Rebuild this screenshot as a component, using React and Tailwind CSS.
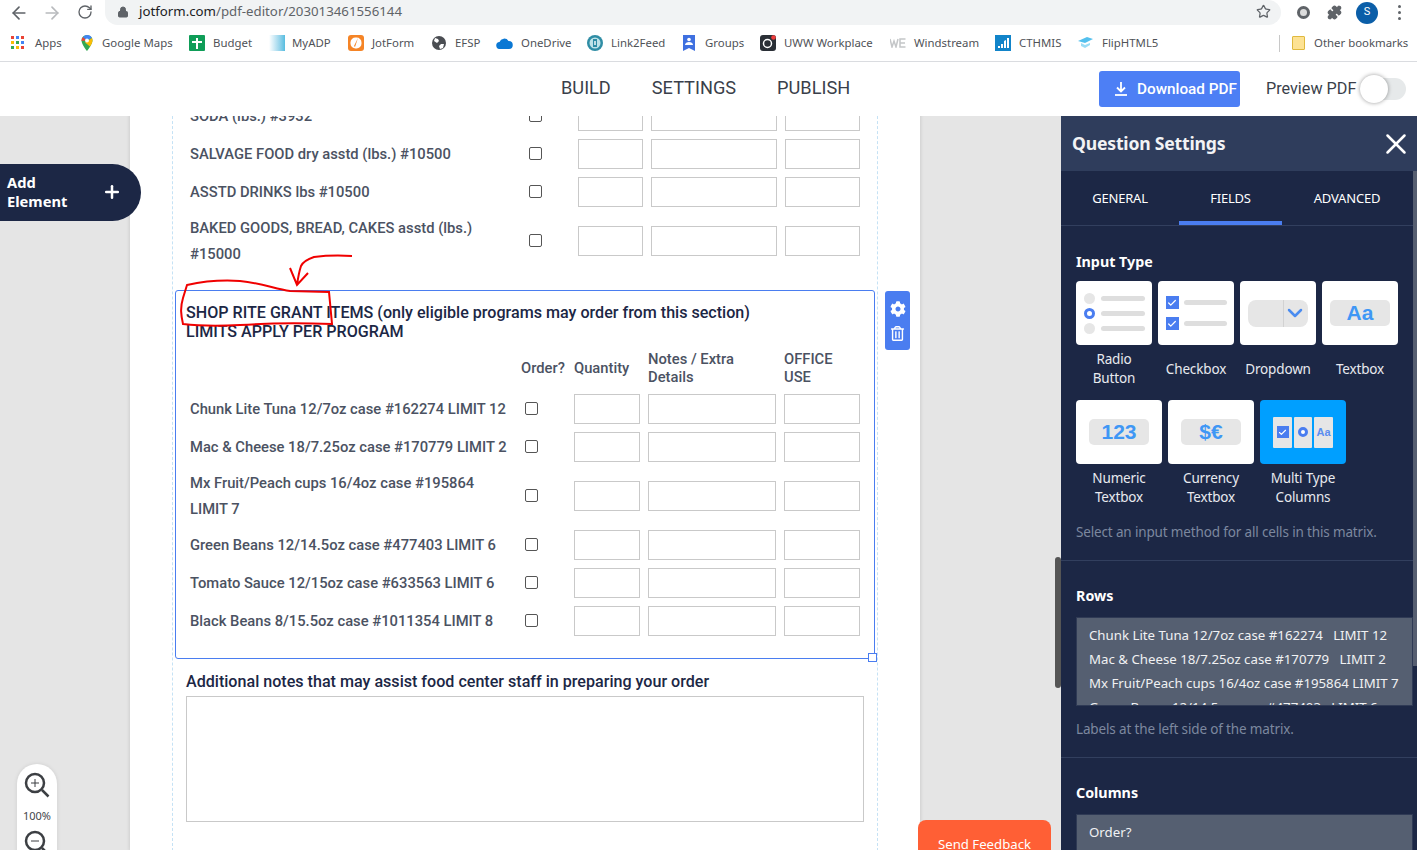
import { ArrowLeft, ArrowRight, RotateCw, Lock, Star, Puzzle, Plus, X, ChevronDown, Check } from 'lucide-react';
import { FaCog, FaRegTrashAlt } from 'react-icons/fa';

const bookmarks = [
  { label: 'Apps', width: 'w-[69px]', gap: 'gap-[11px]', icon: <AppsIcon /> },
  { label: 'Google Maps', width: 'w-[109px]', gap: 'gap-[8px]', icon: <MapsIcon /> },
  { label: 'Budget', width: 'w-[80px]', gap: 'gap-[8px]', icon: <BudgetIcon /> },
  { label: 'MyADP', width: 'w-[79px]', gap: 'gap-[7px]', icon: <MyAdpIcon /> },
  { label: 'JotForm', width: 'w-[83px]', gap: 'gap-[8px]', icon: <JotIcon /> },
  { label: 'EFSP', width: 'w-[65px]', gap: 'gap-[8px]', icon: <GlobeIcon /> },
  { label: 'OneDrive', width: 'w-[91px]', gap: 'gap-[8px]', icon: <CloudIcon /> },
  { label: 'Link2Feed', width: 'w-[95px]', gap: 'gap-[8px]', icon: <LinkIcon /> },
  { label: 'Groups', width: 'w-[78px]', gap: 'gap-[9px]', icon: <GroupsIcon /> },
  { label: 'UWW Workplace', width: 'w-[130px]', gap: 'gap-[8px]', icon: <UwwIcon /> },
  { label: 'Windstream', width: 'w-[105px]', gap: 'gap-[8px]', icon: <WeIcon /> },
  { label: 'CTHMIS', width: 'w-[83px]', gap: 'gap-[8px]', icon: <CthIcon /> },
  { label: 'FlipHTML5', width: 'w-[201px]', gap: 'gap-[8px]', icon: <FlipIcon /> },
];

const foodRows = [
  { label: 'SALVAGE FOOD dry asstd (lbs.) #10500' },
  { label: 'ASSTD DRINKS lbs #10500' },
  { label: 'BAKED GOODS, BREAD, CAKES asstd (lbs.) #15000' },
];

const grantRows = [
  { label: 'Chunk Lite Tuna 12/7oz case #162274 LIMIT 12' },
  { label: 'Mac & Cheese 18/7.25oz case #170779 LIMIT 2' },
  { label: 'Mx Fruit/Peach cups 16/4oz case #195864 LIMIT 7' },
  { label: 'Green Beans 12/14.5oz case #477403 LIMIT 6' },
  { label: 'Tomato Sauce 12/15oz case #633563 LIMIT 6' },
  { label: 'Black Beans 8/15.5oz case #1011354 LIMIT 8' },
];

function AppsIcon() {
  const colors = ['bg-[#ea4335]', 'bg-[#4285f4]', 'bg-[#ea4335]', 'bg-[#fbbc05]', 'bg-[#34a853]', 'bg-[#4285f4]', 'bg-[#34a853]', 'bg-[#fbbc05]', 'bg-[#ea4335]'];
  return (
    <div className="grid h-[13px] w-[13px] grid-cols-3 gap-[2px]">
      {colors.map((color, i) => (
        <span key={i} className={color} />
      ))}
    </div>
  );
}

function MapsIcon() {
  return (
    <svg width="14" height="16" viewBox="0 0 14 16">
      <path d="M7 0a5.5 5.5 0 0 0-5.5 5.5C1.500 9.500 7 16 7 16s5.500-6.500 5.500-10.500A5.500 5.500 0 0 0 7 0z" fill="#34a853" />
      <path d="M3 2 7 5.500 1.500 6A5.500 5.500 0 0 1 3 2z" fill="#ea4335" />
      <path d="M7 0a5.500 5.500 0 0 1 5 3L7 5.500 3 2a5.500 5.500 0 0 1 4-2z" fill="#4285f4" />
      <path d="M12 3a5.500 5.500 0 0 1 .5 2.500C12.500 7.500 11 10 10 11.500L5 7.500z" fill="#fbbc05" />
      <circle cx="7" cy="5.500" r="2" fill="#fff" />
    </svg>
  );
}

function BudgetIcon() {
  return (
    <svg width="16" height="16" viewBox="0 0 16 16">
      <rect width="16" height="16" rx="1" fill="#0f9d58" />
      <path d="M7 3h2v3h4v2H9v6H7V8H3V6h4z" fill="#fff" />
    </svg>
  );
}

function MyAdpIcon() {
  return <div className="h-4 w-4 bg-gradient-to-r from-white to-[#55bde0]" />;
}

function JotIcon() {
  return (
    <svg width="16" height="16" viewBox="0 0 16 16">
      <rect width="16" height="16" rx="3" fill="#f58426" />
      <rect x="2.500" y="2.500" width="11" height="11" rx="5" fill="#fff" />
      <path d="M10 3 7 12l-1-1z" fill="#f58426" />
    </svg>
  );
}

function GlobeIcon() {
  return (
    <svg width="16" height="16" viewBox="0 0 16 16">
      <circle cx="8" cy="8" r="7" fill="#4a4d52" />
      <path d="M4 3l3 1 1 2-2 2-3-2zM10 9l3 0-1 4-3 1-1-3z" fill="#fff" />
    </svg>
  );
}

function CloudIcon() {
  return (
    <svg width="17" height="12" viewBox="0 0 17 12">
      <path d="M4 12a3.500 3.500 0 0 1-.5-7A5 5 0 0 1 12.500 4 4 4 0 0 1 13 12z" fill="#0a78d4" />
    </svg>
  );
}

function LinkIcon() {
  return (
    <svg width="16" height="16" viewBox="0 0 16 16">
      <circle cx="8" cy="8" r="8" fill="#2f8da5" />
      <circle cx="8" cy="8" r="5.500" fill="#bfe3e8" />
      <rect x="6" y="4" width="4" height="8" fill="#2f8da5" />
      <rect x="7.300" y="6" width="1.400" height="4" fill="#fff" />
    </svg>
  );
}

function GroupsIcon() {
  return (
    <svg width="14" height="16" viewBox="0 0 14 16">
      <path d="M1 0h12v16l-6-3-6 3z" fill="#3f70e0" />
      <circle cx="7" cy="4.500" r="1.800" fill="#fff" />
      <path d="M3 10c0-2 2-3 4-3s4 1 4 3z" fill="#fff" />
    </svg>
  );
}

function UwwIcon() {
  return (
    <svg width="16" height="16" viewBox="0 0 16 16">
      <rect width="16" height="16" rx="3" fill="#2a2f36" />
      <circle cx="7.500" cy="8.500" r="4" fill="none" stroke="#fff" strokeWidth="1.500" />
      <circle cx="13.500" cy="2.500" r="2.300" fill="#ef3b3b" />
    </svg>
  );
}

function WeIcon() {
  return (
    <svg width="16" height="10" viewBox="0 0 16 10" fill="none" stroke="#c4c6c8" strokeWidth="1.500">
      <path d="M0 1l2 8 2-6 2 6 2-8" />
      <path d="M15.500 1H10v8h5.500M10 5h5" />
    </svg>
  );
}

function CthIcon() {
  return (
    <svg width="16" height="16" viewBox="0 0 16 16">
      <rect width="16" height="16" fill="#1284c9" />
      <path d="M3 13v-2h2v2zM6 13V9h2v4zM9 13V6l2-1v8zM12 13V3h2v10z" fill="#fff" />
    </svg>
  );
}

function FlipIcon() {
  return (
    <svg width="16" height="14" viewBox="0 0 16 14">
      <path d="M0 5l9-4 6 2-8 4z" fill="#53c0ee" />
      <path d="M3 7l4 2 5-2v2l-5 3-4-2z" fill="#9adcf5" />
    </svg>
  );
}

function DownloadIcon() {
  return (
    <svg width="12" height="14" viewBox="0 0 12 14" fill="none" stroke="#fff" strokeWidth="1.800">
      <path d="M6 0v9M2 5.500 6 9.500l4-4" />
      <path d="M0 13h12" />
    </svg>
  );
}

function ZoomIcon({ plus }) {
  return (
    <svg width="26" height="26" viewBox="0 0 26 26" fill="none" stroke="#3c3f43">
      <circle cx="11" cy="11" r="9" strokeWidth="2.500" />
      <path d="M18 18l6.500 6.500" strokeWidth="2.500" />
      <path d="M7 11h8" strokeWidth="1" />
      {plus && <path d="M11 7v8" strokeWidth="1" />}
    </svg>
  );
}

function Line({ className }) {
  return <span className={`block h-[5px] rounded-full bg-[#dedede] ${className}`} />;
}

function RadioTile() {
  return (
    <div className="flex flex-col gap-[4px]">
      {[0, 1, 2].map((i) => (
        <div key={i} className="flex items-center gap-[6px]">
          {i === 1 ? (
            <span className="h-[11px] w-[11px] rounded-full border-[3px] border-[#4a7df0] bg-white" />
          ) : (
            <span className="h-[11px] w-[11px] rounded-full bg-[#e6e6e6]" />
          )}
          <Line className="w-[44px]" />
        </div>
      ))}
    </div>
  );
}

function CheckTile() {
  return (
    <div className="flex flex-col gap-[8px]">
      {[0, 1].map((i) => (
        <div key={i} className="flex items-center gap-[5px]">
          <span className="flex h-[13px] w-[13px] items-center justify-center bg-[#4a7df0]">
            <Check size={10} strokeWidth={3} className="text-white" />
          </span>
          <Line className="w-[43px]" />
        </div>
      ))}
    </div>
  );
}

function DropdownTile() {
  return (
    <div className="flex h-[27px] w-[60px] items-center rounded-[8px] bg-[#e6e6e6]">
      <span className="h-full w-[36px] border-r border-[#d2d2d2]" />
      <ChevronDown size={24} strokeWidth={2.500} className="-ml-[1px] text-[#4a8cf0]" />
    </div>
  );
}

function TextPill({ children, width }) {
  return (
    <div className={`flex h-[26px] ${width} items-center justify-center rounded-[5px] bg-[#e6e6e6] font-['Liberation_Sans',sans-serif] text-[21px] font-bold text-[#3f97f5]`}>
      {children}
    </div>
  );
}

function MultiTile() {
  return (
    <div className="flex gap-[2px]">
      <span className="flex h-[31px] w-[19px] items-center justify-center rounded-[1px] bg-[#e6e6e6]">
        <span className="flex h-[12px] w-[12px] items-center justify-center bg-[#4a7df0]">
          <Check size={9} strokeWidth={3} className="text-white" />
        </span>
      </span>
      <span className="flex h-[31px] w-[18px] items-center justify-center rounded-[1px] bg-[#e6e6e6]">
        <span className="h-[10px] w-[10px] rounded-full border-[3px] border-[#4a7df0] bg-white" />
      </span>
      <span className="flex h-[31px] w-[19px] items-center justify-center rounded-[1px] bg-[#e6e6e6] font-['Liberation_Sans',sans-serif] text-[11px] font-bold text-[#5b8df0]">
        Aa
      </span>
    </div>
  );
}

function Tile({ width, active, lines, children }) {
  return (
    <div className={`${width} flex flex-col items-center`}>
      <div className={`flex h-[64px] w-full items-center justify-center rounded-[4px] ${active ? 'bg-[#009fff]' : 'bg-white'}`}>
        {children}
      </div>
      <div className="mt-[5px] flex h-[38px] items-center text-center text-[13.5px] leading-[19px] tracking-[-0.15px] text-[#e8eaef]">
        <span>
          {lines.map((line) => (
            <span key={line} className="block whitespace-nowrap">
              {line}
            </span>
          ))}
        </span>
      </div>
    </div>
  );
}

function CellInput({ width }) {
  return <div className={`h-[30px] ${width} border border-[#c9c9c9] bg-white`} />;
}

function MatrixRow({ label, labelWidth, inputs }) {
  return (
    <div className="flex items-center">
      <div className={`${labelWidth} pr-[15px] text-[14.75px] leading-[26px] font-medium text-[#4b5262]`}>{label}</div>
      <div className="mb-[2px] w-[49px]">
        <div className="h-[13px] w-[13px] rounded-[2px] border border-[#555] bg-white" />
      </div>
      <div className="flex gap-[8px]">
        {inputs.map((w, i) => (
          <CellInput key={i} width={w} />
        ))}
      </div>
    </div>
  );
}

function Document() {
  const firstInputs = ['w-[65px]', 'w-[126px]', 'w-[75px]'];
  const grantInputs = ['w-[66px]', 'w-[128px]', 'w-[76px]'];
  return (
    <div className="-mt-[15px] ml-[130px] h-[750px] w-[790px] bg-white shadow-[0_0_4px_rgba(0,0,0,0.15)]">
      <div className="ml-[42px] h-full w-[706px] border-x border-dashed border-[#c5e2f5]">
        <div className="flex flex-col gap-[8px] pl-[17px]">
          <MatrixRow label="SODA (lbs.) #3932" labelWidth="w-[339px]" inputs={firstInputs} />
          {foodRows.map((row) => (
            <MatrixRow key={row.label} label={row.label} labelWidth="w-[339px]" inputs={firstInputs} />
          ))}
        </div>

        {/* Selected question */}
        <div className="relative mt-[23px] ml-[2px] h-[369px] w-[700px] rounded-[3px] border border-[#4a7df0]">
          <div className="pt-[12px] pl-[10px] text-[16.1px] leading-[19px] font-medium text-[#1c2745]">
            <div>SHOP RITE GRANT ITEMS (only eligible programs may order from this section)</div>
            <div>LIMITS APPLY PER PROGRAM</div>
          </div>
          <div className="mt-[9px] flex h-[36px] items-center pl-[345px] text-[14.75px] leading-[18px] font-medium text-[#4b5262]">
            <span className="w-[53px]">Order?</span>
            <span className="w-[74px]">Quantity</span>
            <span className="w-[136px]">Notes / Extra<br />Details</span>
            <span>OFFICE<br />USE</span>
          </div>
          <div className="mt-[8px] flex flex-col gap-[8px] pl-[14px]">
            {grantRows.map((row) => (
              <MatrixRow key={row.label} label={row.label} labelWidth="w-[335px]" inputs={grantInputs} />
            ))}
          </div>
          <span className="absolute -right-[3px] -bottom-[4px] h-[9px] w-[9px] border border-[#4a7df0] bg-white" />
          <div className="absolute top-0 -right-[36px] flex h-[59px] w-[25px] flex-col items-center justify-center gap-[9px] rounded-[3px] bg-[#4a7df0] text-white">
            <FaCog size={16} />
            <FaRegTrashAlt size={15} />
          </div>
        </div>

        <div className="mt-[13px] ml-[13px] text-[16.1px] leading-[20px] font-medium text-[#1c2745]">
          Additional notes that may assist food center staff in preparing your order
        </div>
        <div className="mt-[4px] ml-[13px] h-[126px] w-[678px] border border-[#c9c9c9]" />
      </div>
    </div>
  );
}

function SettingsPanel() {
  return (
    <div className="absolute top-0 right-0 bottom-0 w-[356px] overflow-hidden bg-[#1c2745] font-['Noto_Sans',sans-serif] text-white">
      <div className="flex h-[55px] items-center justify-between bg-[#2f3d5c] pr-[4px] pl-[11px]">
        <span className="text-[17.6px] font-bold tracking-[-0.2px] text-[#f2f3f5]">Question Settings</span>
        <X size={34} strokeWidth={1.800} />
      </div>
      <div className="flex h-[55px] border-b border-[#323f5e] pr-[5px] text-[13px] tracking-[-0.2px]">
        <div className="flex w-[118px] items-center justify-center pt-[2px]">GENERAL</div>
        <div className="flex w-[103px] items-center justify-center border-b-[4px] border-[#4a7df0] pt-[6px]">FIELDS</div>
        <div className="flex flex-1 items-center justify-center pt-[2px]">ADVANCED</div>
      </div>

      <div className="h-[335px] border-b border-[#323f5e] px-[15px] pt-[26px]">
        <div className="text-[14.3px] leading-[20px] font-bold">Input Type</div>
        <div className="mt-[9px] flex gap-[6px]">
          <Tile width="w-[76px]" lines={['Radio', 'Button']}>
            <RadioTile />
          </Tile>
          <Tile width="w-[76px]" lines={['Checkbox']}>
            <CheckTile />
          </Tile>
          <Tile width="w-[76px]" lines={['Dropdown']}>
            <DropdownTile />
          </Tile>
          <Tile width="w-[76px]" lines={['Textbox']}>
            <TextPill width="w-[60px]">Aa</TextPill>
          </Tile>
        </div>
        <div className="mt-[12px] flex gap-[6px]">
          <Tile width="w-[86px]" lines={['Numeric', 'Textbox']}>
            <TextPill width="w-[60px]">123</TextPill>
          </Tile>
          <Tile width="w-[86px]" lines={['Currency', 'Textbox']}>
            <TextPill width="w-[60px]">$€</TextPill>
          </Tile>
          <Tile width="w-[86px]" active lines={['Multi Type', 'Columns']}>
            <MultiTile />
          </Tile>
        </div>
        <div className="mt-[15px] text-[13.5px] leading-[20px] tracking-[-0.15px] text-[#7c889f]">
          Select an input method for all cells in this matrix.
        </div>
      </div>

      <div className="h-[197px] border-b border-[#323f5e] px-[15px] pt-[25px]">
        <div className="text-[14.3px] leading-[20px] font-bold">Rows</div>
        <div className="mt-[11px] h-[89px] w-[337px] overflow-hidden border border-[#2f3a55] bg-[#555f71] pt-[5px] pl-[12px] text-[13.25px] leading-[24px] whitespace-pre text-[#f0f1f3]">
          <div>Chunk Lite Tuna 12/7oz case #162274   LIMIT 12</div>
          <div>Mac &amp; Cheese 18/7.25oz case #170779   LIMIT 2</div>
          <div>Mx Fruit/Peach cups 16/4oz case #195864 LIMIT 7</div>
          <div>Green Beans 12/14.5oz case #477403   LIMIT 6</div>
        </div>
        <div className="mt-[13px] text-[13.5px] leading-[20px] tracking-[-0.15px] text-[#7c889f]">
          Labels at the left side of the matrix.
        </div>
      </div>

      <div className="px-[15px] pt-[25px]">
        <div className="text-[14.3px] leading-[20px] font-bold">Columns</div>
        <div className="mt-[11px] h-[60px] w-[337px] border border-[#2f3a55] bg-[#555f71] pt-[5px] pl-[12px] text-[13.25px] leading-[24px] text-[#f0f1f3]">
          Order?
        </div>
      </div>

      <div className="absolute top-[55px] right-0 h-[495px] w-[4px] bg-[#565e70]" />
    </div>
  );
}

export default function App() {
  return (
    <div className="relative flex h-[850px] w-[1417px] flex-col overflow-hidden bg-white font-['Roboto',sans-serif]">
      {/* Browser chrome */}
      <div className="flex h-[25px] items-center bg-white text-[#5f6368]">
        <ArrowLeft size={20} className="ml-[9px]" />
        <ArrowRight size={20} className="ml-[13px] text-[#b8babd]" />
        <RotateCw size={16} className="mb-[2px] ml-[15px]" />
        <div className="ml-[12px] flex h-[25px] w-[1176px] items-center rounded-r-full rounded-bl-full bg-[#f1f3f4] pr-[10px] pb-[2px] pl-[12px]">
          <Lock size={12} fill="#5f6368" />
          <span className="ml-[10px] font-['Noto_Sans',sans-serif] text-[13.25px] text-[#202124]">
            jotform.com<span className="text-[#5f6368]">/pdf-editor/203013461556144</span>
          </span>
          <Star size={15} className="ml-auto" />
        </div>
        <span className="ml-[16px] h-[13px] w-[13px] rounded-full border-[3px] border-[#5f6368] bg-[#ddd]" />
        <Puzzle size={15} fill="#5f6368" className="ml-[17px]" />
        <span className="ml-[14px] flex h-[22px] w-[22px] items-center justify-center rounded-full bg-[#0b5ea8] text-[11px] text-white">S</span>
        <span className="ml-[20px] flex flex-col gap-[3px]">
          <span className="h-[3px] w-[3px] rounded-full bg-[#5f6368]" />
          <span className="h-[3px] w-[3px] rounded-full bg-[#5f6368]" />
          <span className="h-[3px] w-[3px] rounded-full bg-[#5f6368]" />
        </span>
      </div>
      <div className="flex h-[37px] items-center border-b border-[#dadce0] pl-[11px] font-['Noto_Sans',sans-serif] text-[11.4px] text-[#4f5257]">
        {bookmarks.map((b) => (
          <div key={b.label} className={`flex ${b.width} ${b.gap} items-center whitespace-nowrap`}>
            {b.icon}
            <span>{b.label}</span>
          </div>
        ))}
        <span className="h-[17px] w-px bg-[#c8c8c8]" />
        <span className="ml-[12px] h-[14px] w-[13px] rounded-[1px] border border-[#e0b93e] bg-[#fde293]" />
        <span className="ml-[9px] whitespace-nowrap">Other bookmarks</span>
      </div>

      {/* App header */}
      <div className="flex h-[54px] items-center">
        <nav className="mb-[2px] ml-[561px] flex w-[289px] gap-[41px] text-[18.2px] text-[#3a3f4a]">
          <span>BUILD</span>
          <span>SETTINGS</span>
          <span>PUBLISH</span>
        </nav>
        <button className="ml-[249px] flex h-[36px] w-[141px] items-center gap-[10px] rounded-[3px] bg-[#4d7ff5] pl-[16px] text-[15.3px] font-medium text-white">
          <DownloadIcon />
          Download PDF
        </button>
        <span className="ml-[26px] text-[16.2px] text-[#3a3f4a]">Preview PDF</span>
        <span className="relative ml-[4px] h-[22px] w-[46px] rounded-full bg-[#e6e9ea]">
          <span className="absolute top-[-3px] left-0 h-[28px] w-[28px] rounded-full bg-white shadow-[0_0_4px_rgba(0,0,0,0.4)]" />
        </span>
      </div>

      {/* Workspace */}
      <div className="relative flex-1 overflow-hidden bg-[#e5e5e5]">
        <Document />

        <div className="absolute top-[48px] left-0 flex h-[57px] w-[141px] items-center rounded-r-full bg-[#1c2745] pb-[2px] pl-[7px] font-['Noto_Sans',sans-serif] text-[14.7px] leading-[19px] font-bold text-white">
          <span>Add<br />Element</span>
          <Plus size={20} strokeWidth={3} className="ml-[35px]" />
        </div>

        <div className="absolute top-[648px] left-[17px] flex h-[120px] w-[40px] flex-col items-center rounded-full bg-white pt-[8px] shadow-[0_0_4px_rgba(0,0,0,0.1)]">
          <ZoomIcon plus />
          <span className="mt-[10px] font-['Noto_Sans',sans-serif] text-[11px] text-[#44474b]">100%</span>
          <div className="mt-[5px]">
            <ZoomIcon />
          </div>
        </div>

        <div className="absolute right-[366px] bottom-[-20px] flex h-[50px] w-[133px] justify-center rounded-t-[8px] bg-[#ff5f35] pt-[15px] font-['Noto_Sans',sans-serif] text-[13.2px] text-white">
          Send Feedback
        </div>

        <div className="absolute top-[441px] right-[356px] h-[131px] w-[6px] rounded-full bg-[#555]" />
        <SettingsPanel />
      </div>

      {/* Red pen annotation */}
      <svg className="pointer-events-none absolute inset-0" width="1417" height="850" fill="none" stroke="#f00000" strokeWidth="2">
        <path d="M187 285C205 281 225 280 240 281C262 283 275 289 290 291L329 292L332 324C300 323 270 323 240 325C220 326 200 326 183 324C181 315 180 308 183 298Z" />
        <path d="M352 256C335 255 322 256 314 257C308 259 303 262 301 266C299 272 298 278 297 285M290 268L297 285L308 273" />
      </svg>
    </div>
  );
}
